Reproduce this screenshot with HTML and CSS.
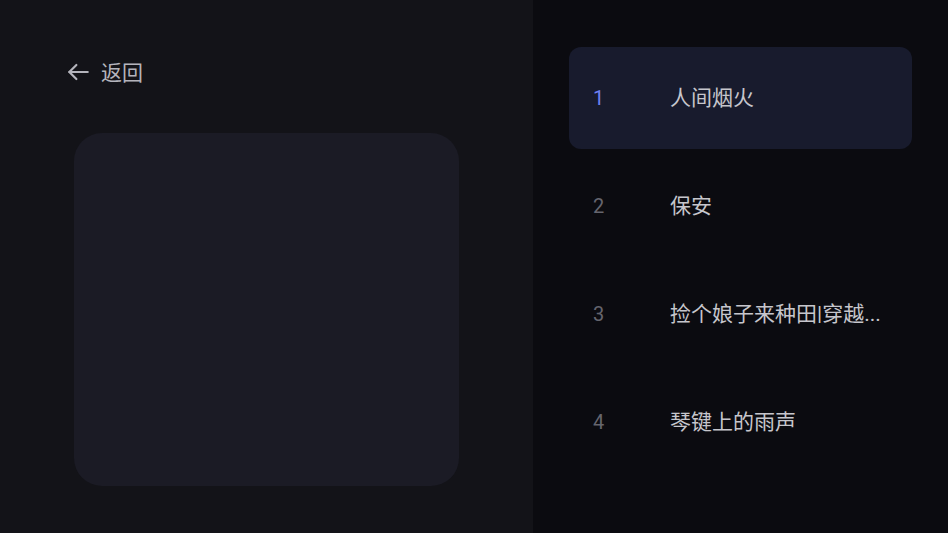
FILE: index.html
```html
<!DOCTYPE html>
<html lang="zh-CN">
<head>
  <meta charset="UTF-8" />
  <meta name="viewport" content="width=device-width, initial-scale=1.0"/>
  <title>章节列表</title>
  <link rel="stylesheet" href="styles.css">
</head>
<body>

  <!-- Left: back + cover -->
  <div class="side">
    <div class="back">
      <svg class="back-icon" width="26" height="26" viewBox="0 0 24 24" fill="none" stroke="currentColor" stroke-width="2" stroke-linecap="round" stroke-linejoin="round">
        <path d="M21 12H4"/>
        <path d="M10.5 5.5L4 12l6.5 6.5"/>
      </svg>
      <span>返回</span>
    </div>
    <div class="cover"></div>
  </div>

  <!-- Right: list -->
  <div class="list">
    <div class="item active">
      <span class="num">1</span>
      <span class="title">人间烟火</span>
    </div>
    <div class="item">
      <span class="num">2</span>
      <span class="title">保安</span>
    </div>
    <div class="item">
      <span class="num">3</span>
      <span class="title">捡个娘子来种田|穿越...</span>
    </div>
    <div class="item">
      <span class="num">4</span>
      <span class="title">琴键上的雨声</span>
    </div>
  </div>

</body>
</html>
```

FILE: styles.css
```css
/* Base */
html, body {
  height: 100%;
}
body {
  margin: 0;
  display: flex;
  background: #0b0b10;
  font-family: Roboto, "Noto Sans CJK SC", sans-serif;
  overflow: hidden;
}

/* Left side */
.side {
  width: 533px;
  flex-shrink: 0;
  background: #131318;
  padding: 58px 0 0 65px;
  box-sizing: border-box;
}
.back {
  display: flex;
  align-items: center;
  gap: 10px;
  color: #b4b4bc;
  font-size: 21px;
  height: 28px;
}
.back span {
  padding-bottom: 2px;
}
.back-icon {
  display: block;
}
.cover {
  margin: 47px 0 0 9px;
  width: 385px;
  height: 353px;
  border-radius: 28px;
  background: #1b1b25;
}

/* Right list */
.list {
  flex: 1;
  padding: 47px 36px 0 36px;
  display: flex;
  flex-direction: column;
  gap: 6px;
}
.item {
  height: 102px;
  display: flex;
  align-items: center;
  padding-left: 24px;
  border-radius: 12px;
}
.item.active {
  background: #181b2d;
}
.num {
  width: 77px;
  flex-shrink: 0;
  font-size: 20px;
  color: #65656e;
}
.item.active .num {
  color: #6f7ff0;
}
.title {
  font-size: 21px;
  color: #c6c6cc;
  white-space: nowrap;
  padding-bottom: 4px;
}
```
